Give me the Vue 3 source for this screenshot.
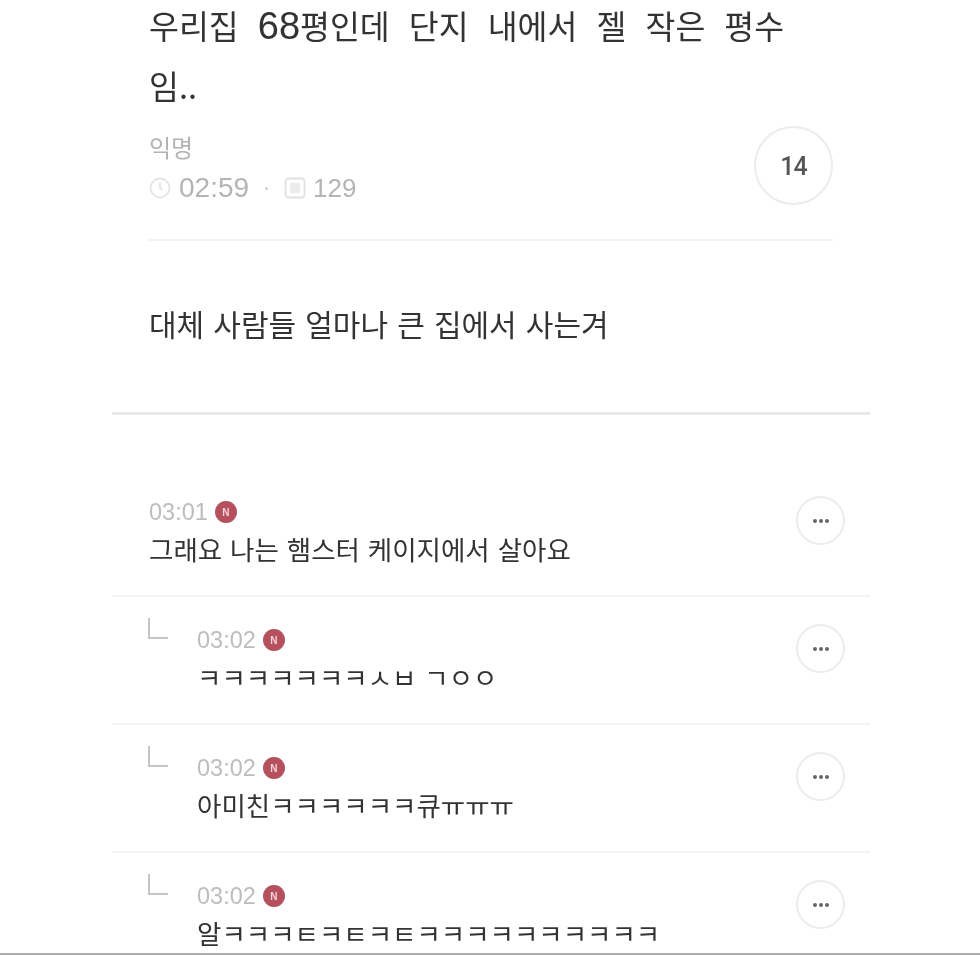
<template>
  <div class="page">
    <div class="sheet">
      <header class="post-head">
        <h1 class="title">우리집 <span class="num">68</span>평인데 단지 내에서 젤 작은 평수<br />임..</h1>
        <div class="meta-row">
          <div class="meta">
            <div class="author">익명</div>
            <div class="stats">
              <svg class="icon" width="22" height="22" viewBox="0 0 22 22">
                <circle cx="11" cy="11" r="9.5" fill="none" stroke="#e4e4e4" stroke-width="1.8" />
                <path d="M11 5.5V11l3 2" fill="none" stroke="#e0e0e0" stroke-width="1.5" />
              </svg>
              <span class="stat-time">02:59</span>
              <span class="sep"></span>
              <svg class="icon" width="22" height="22" viewBox="0 0 22 22">
                <rect x="1.5" y="1.5" width="19" height="19" rx="3" fill="none" stroke="#e2e2e2" stroke-width="1.8" />
                <rect x="6" y="6" width="10" height="10" fill="#ececec" />
              </svg>
              <span class="stat-views">129</span>
            </div>
          </div>
          <div class="count">14</div>
        </div>
      </header>

      <p class="body-text">대체 사람들 얼마나 큰 집에서 사는겨</p>

      <section class="comments">
        <div
          v-for="c in comments"
          :key="c.text"
          class="comment"
          :class="{ reply: c.reply }"
        >
          <svg v-if="c.reply" class="reply-mark" width="24" height="24" viewBox="0 0 24 24">
            <path d="M2 1v20h19" fill="none" stroke="#c4c4c4" stroke-width="2" />
          </svg>
          <div class="comment-main">
            <div class="comment-time">
              <span>{{ c.time }}</span>
              <span class="badge">N</span>
            </div>
            <div class="comment-text">{{ c.text }}</div>
          </div>
          <button class="more"><i></i><i></i><i></i></button>
        </div>
      </section>
    </div>
  </div>
</template>

<script setup>
const comments = [
  { time: "03:01", text: "그래요 나는 햄스터 케이지에서 살아요", reply: false },
  { time: "03:02", text: "ㅋㅋㅋㅋㅋㅋㅋㅅㅂ ㄱㅇㅇ", reply: true },
  { time: "03:02", text: "아미친ㅋㅋㅋㅋㅋㅋ큐ㅠㅠㅠ", reply: true },
  { time: "03:02", text: "알ㅋㅋㅋㅌㅋㅌㅋㅌㅋㅋㅋㅋㅋㅋㅋㅋㅋㅋ", reply: true },
];
</script>

<style>
body {
  background: #fff;
}
</style>

<style scoped>
.page {
  box-sizing: border-box;
  height: 955px;
  overflow: hidden;
  border-bottom: 2px solid #ababab;
  background: #fff;
  font-family: "Noto Sans CJK KR", "Liberation Sans", sans-serif;
}

.sheet {
  width: 758px;
  margin-left: 112px;
  filter: blur(0.6px);
}

.post-head {
  margin: 0 37px;
  border-bottom: 2px solid #f2f2f2;
  height: 244px;
}

.title {
  margin: -5px 0 0;
  font-size: 32.5px;
  line-height: 60px;
  font-weight: 400;
  word-spacing: 11.8px;
  color: #333;
  white-space: nowrap;
}

.num {
  font-family: "Liberation Sans", sans-serif;
  font-size: 38px;
  line-height: 1;
}

.meta-row {
  display: flex;
  justify-content: space-between;
  align-items: flex-start;
  margin-top: 11px;
}

.meta {
  padding-top: 1px;
}

.author {
  font-size: 24px;
  line-height: 40px;
  color: #b4b4b4;
}

.stats {
  display: flex;
  align-items: center;
  height: 42px;
  font-family: "Liberation Sans", sans-serif;
  font-size: 28px;
  color: #b4b4b4;
}

.stat-time {
  margin-left: 8px;
}

.sep {
  width: 3px;
  height: 3px;
  border-radius: 50%;
  background: #d0d0d0;
  margin: 0 16px;
}

.stat-views {
  margin-left: 7px;
  font-size: 26px;
}

.count {
  box-sizing: border-box;
  width: 79px;
  height: 79px;
  padding-top: 2px;
  border: 2px solid #ececec;
  border-radius: 50%;
  display: flex;
  align-items: center;
  justify-content: center;
  font-family: Roboto, "Liberation Sans", sans-serif;
  font-size: 25px;
  font-weight: 500;
  letter-spacing: -1px;
  color: #555;
}

.body-text {
  margin: 0;
  padding: 0 37px;
  height: 171px;
  border-bottom: 3px solid #e9e9e9;
  font-size: 30px;
  word-spacing: 2.4px;
  line-height: 164px;
  color: #333;
}

.comments {
  padding-top: 54px;
}

.comment {
  position: relative;
  box-sizing: border-box;
  height: 128px;
  padding: 28px 25px 0 37px;
  display: flex;
  justify-content: space-between;
  border-bottom: 2px solid #f3f3f3;
}

.comment.reply {
  padding-left: 85px;
}

.reply-mark {
  position: absolute;
  left: 35px;
  top: 20px;
}

.comment-time {
  display: flex;
  align-items: center;
  gap: 7px;
  height: 30px;
  font-family: "Liberation Sans", sans-serif;
  font-size: 23.5px;
  color: #bdbdbd;
}

.badge {
  width: 22px;
  height: 22px;
  border-radius: 50%;
  background: #b4515c;
  color: #f3d5d8;
  font-size: 10px;
  font-weight: 700;
  display: flex;
  align-items: center;
  justify-content: center;
}

.comment-text {
  margin-top: 3px;
  font-size: 26.5px;
  word-spacing: 2px;
  line-height: 38px;
  color: #333;
  white-space: nowrap;
}

.more {
  flex: none;
  box-sizing: border-box;
  width: 49px;
  height: 49px;
  margin-top: -1px;
  padding: 0;
  background: #fff;
  border: 2px solid #ececec;
  border-radius: 50%;
  display: flex;
  align-items: center;
  justify-content: center;
  gap: 2px;
}

.more i {
  width: 4px;
  height: 4px;
  border-radius: 50%;
  background: #666;
}
</style>
